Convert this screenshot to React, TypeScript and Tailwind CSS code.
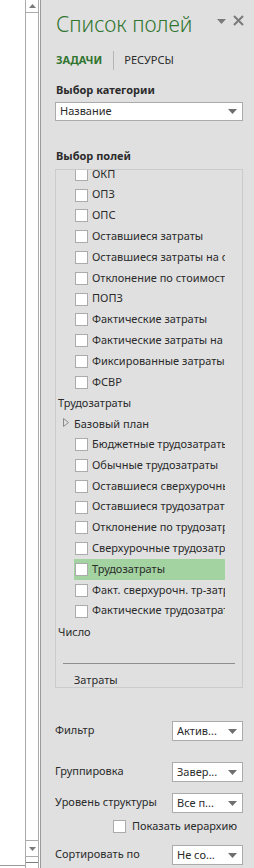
import React from 'react';

type Row =
  | { kind: 'check'; label: string; active?: boolean }
  | { kind: 'group'; label: string }
  | { kind: 'branch'; label: string };

const rows: Row[] = [
  { kind: 'check', label: 'ОКП' },
  { kind: 'check', label: 'ОПЗ' },
  { kind: 'check', label: 'ОПС' },
  { kind: 'check', label: 'Оставшиеся затраты' },
  { kind: 'check', label: 'Оставшиеся затраты на сверхурочные' },
  { kind: 'check', label: 'Отклонение по стоимости' },
  { kind: 'check', label: 'ПОПЗ' },
  { kind: 'check', label: 'Фактические затраты' },
  { kind: 'check', label: 'Фактические затраты на сверхурочные' },
  { kind: 'check', label: 'Фиксированные затраты' },
  { kind: 'check', label: 'ФСВР' },
  { kind: 'group', label: 'Трудозатраты' },
  { kind: 'branch', label: 'Базовый план' },
  { kind: 'check', label: 'Бюджетные трудозатраты' },
  { kind: 'check', label: 'Обычные трудозатраты' },
  { kind: 'check', label: 'Оставшиеся сверхурочные' },
  { kind: 'check', label: 'Оставшиеся трудозатраты' },
  { kind: 'check', label: 'Отклонение по трудозатратам' },
  { kind: 'check', label: 'Сверхурочные трудозатраты' },
  { kind: 'check', label: 'Трудозатраты', active: true },
  { kind: 'check', label: 'Факт. сверхурочн. тр-затраты' },
  { kind: 'check', label: 'Фактические трудозатраты' },
  { kind: 'group', label: 'Число' },
];

const Box = ({ className = '' }: { className?: string }) => (
  <span className={`block w-[13px] h-[13px] shrink-0 bg-white border border-[#ababab] ${className}`} />
);

const Caret = () => (
  <svg width="9" height="5" viewBox="0 0 9 5" className="shrink-0">
    <path d="M0 0h9L4.5 5z" fill="#6f6f6f" />
  </svg>
);

const Select = ({ value, className = '' }: { value: string; className?: string }) => (
  <div className={`flex items-center justify-between bg-white border border-[#ababab] pl-[4px] pr-[5px] ${className}`}>
    <span className="truncate">{value}</span>
    <Caret />
  </div>
);

const FieldRow = ({ row }: { row: Row }) => {
  if (row.kind === 'group') {
    return <div className="h-[20.8px] flex items-center pl-[2px] whitespace-nowrap">{row.label}</div>;
  }
  if (row.kind === 'branch') {
    return (
      <div className="h-[20.8px] flex items-center pl-[7px] whitespace-nowrap">
        <svg width="6" height="9" viewBox="0 0 6 9" className="mr-[5px] -mt-[3px]">
          <path d="M0.5 0.5L5.5 4.5L0.5 8.5z" fill="none" stroke="#8a8a8a" />
        </svg>
        {row.label}
      </div>
    );
  }
  return (
    <div
      className={`h-[20.8px] ml-[18px] w-[151px] overflow-hidden flex items-center whitespace-nowrap ${
        row.active ? 'bg-[#a3d3a0]' : ''
      }`}
    >
      <Box className="ml-[1px] mr-[4px]" />
      <span className="-mt-[1px]">{row.label}</span>
    </div>
  );
};

export default function App() {
  return (
    <div
      className="h-[868px] w-[254px] flex overflow-hidden text-[11px] text-[#2b2b2b]"
      style={{ fontFamily: '"Noto Sans", "DejaVu Sans", sans-serif' }}
    >
      {/* sheet edge + vertical scrollbar */}
      <div className="w-[25px] shrink-0 bg-white flex flex-col justify-end">
        <div className="h-[2px] border-t border-[#9a9a9a] mb-[1px]" />
      </div>
      <div className="w-[14px] shrink-0 bg-white border-l border-r border-[#ababab] flex flex-col">
        <div className="h-[13px] border-b border-[#ababab] flex items-center justify-center">
          <svg width="7" height="4" viewBox="0 0 7 4">
            <path d="M0 4h7L3.5 0z" fill="#7a7a7a" />
          </svg>
        </div>
        <div className="flex-1" />
        <div className="h-[17px] border-t border-b border-[#ababab] flex items-center justify-center">
          <svg width="7" height="4" viewBox="0 0 7 4">
            <path d="M0 0h7L3.5 4z" fill="#7a7a7a" />
          </svg>
        </div>
        <div className="h-[6px] border-b border-[#7a7a7a]" />
        <div className="h-[5px]" />
      </div>
      <div className="w-[2px] shrink-0 bg-white border-r border-[#9a9a9a]" />

      {/* field list pane */}
      <div className="flex-1 min-w-0 bg-[#e0e0e0] pl-[14px] pr-[11px] flex flex-col">
        <div className="flex items-center h-[30px] mt-[9px]">
          <h1 className="text-[21px] font-light text-[#31752f] leading-none pl-[1px] whitespace-nowrap">Список полей</h1>
          <div className="flex-1" />
          <svg width="9" height="5" viewBox="0 0 9 5" className="mr-[7px] -mt-[5px] shrink-0">
            <path d="M0 0h9L4.5 5z" fill="#7a7a7a" />
          </svg>
          <svg width="11" height="11" viewBox="0 0 11 11" className="-mt-[8px] mr-[-1px] shrink-0">
            <path d="M1 1l9 9M10 1l-9 9" stroke="#7a7a7a" strokeWidth="2" />
          </svg>
        </div>

        <div className="flex items-center mt-[11px] h-[20px]">
          <span className="font-bold text-[#31752f] pl-[1px]">ЗАДАЧИ</span>
          <span className="w-px h-[19px] bg-[#b5b5b5] ml-[11px] mr-[10px]" />
          <span>РЕСУРСЫ</span>
        </div>

        <div className="font-bold mt-[11px] h-[18px] leading-[18px] pl-[1px]">Выбор категории</div>
        <Select value="Название" className="mt-[3px] h-[19px]" />

        <div className="font-bold mt-[26px] h-[18px] leading-[18px] pl-[1px]">Выбор полей</div>
        <div className="mt-[4px] h-[519px] border border-[#cbcbcb] overflow-hidden flex flex-col">
          <div className="-mt-[6px]">
            {rows.map((r, i) => (
              <FieldRow key={i} row={r} />
            ))}
          </div>
          <div className="mt-[21px] mx-[7px] h-px shrink-0 bg-[#8e8e8e]" />
          <div className="mt-[6px] pl-[18px] h-[20px] shrink-0 flex items-center">Затраты</div>
        </div>

        <div className="mt-[33px] flex items-center justify-between h-[20px]">
          <span className="-mt-[2px]">Фильтр</span>
          <Select value="Актив..." className="w-[71px] h-[20px]" />
        </div>
        <div className="mt-[21px] flex items-center justify-between h-[20px]">
          <span className="-mt-[2px]">Группировка</span>
          <Select value="Завер..." className="w-[71px] h-[20px]" />
        </div>
        <div className="mt-[11px] flex items-center justify-between h-[20px]">
          <span className="-mt-[2px] whitespace-nowrap">Уровень структуры</span>
          <Select value="Все п..." className="w-[71px] h-[20px]" />
        </div>
        <div className="mt-[7px] flex items-center h-[13px] pl-[58px]">
          <Box className="mr-[6px]" />
          <span className="whitespace-nowrap">Показать иерархию</span>
        </div>
        <div className="mt-[12px] flex items-center justify-between h-[20px]">
          <span className="-mt-[2px]">Сортировать по</span>
          <Select value="Не со..." className="w-[71px] h-[20px]" />
        </div>
      </div>
    </div>
  );
}
